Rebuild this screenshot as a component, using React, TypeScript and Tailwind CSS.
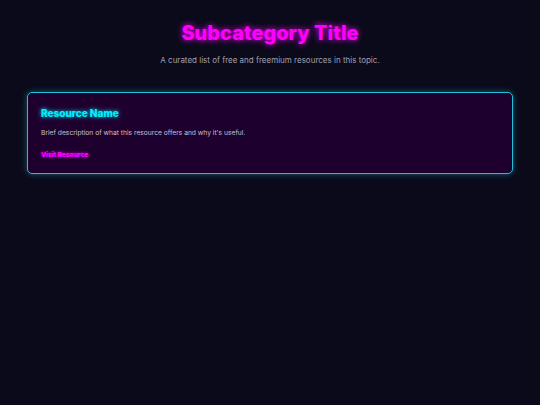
export default function App() {
  return (
    <div
      className="min-h-[405px] w-full bg-[#0a0a1a] px-[27px] pt-[20px]"
      style={{ fontFamily: "Inter, 'Noto Sans', sans-serif" }}
    >
      <header className="flex flex-col items-center">
        <h1 className="text-[20px] font-extrabold leading-[26px] text-[#ff00ff] [text-shadow:0_0_6px_#ff00ff]">
          Subcategory Title
        </h1>
        <p className="mt-[9px] text-[8px] leading-[10px] text-[#a0a0b0]">
          A curated list of free and freemium resources in this topic.
        </p>
      </header>

      <div className="mt-[27px] rounded-[5px] border border-[#22c0d8] bg-[#1e002e] px-[13px] pb-[13px] pt-[13px] shadow-[0_0_6px_rgba(34,192,216,0.45)]">
        <h3 className="text-[10px] font-extrabold leading-[14px] text-[#00f0ff] [text-shadow:0_0_4px_#00f0ff]">
          Resource Name
        </h3>
        <p className="mt-[8px] text-[6.7px] leading-[10px] text-[#c8c0d0]">
          Brief description of what this resource offers and why it's useful.
        </p>
        <a
          href="#"
          className="mt-[12px] block text-[6.6px] font-extrabold leading-[10px] text-[#ff00ff] [text-shadow:0_0_3px_#ff00ff]"
        >
          Visit Resource
        </a>
      </div>
    </div>
  );
}
